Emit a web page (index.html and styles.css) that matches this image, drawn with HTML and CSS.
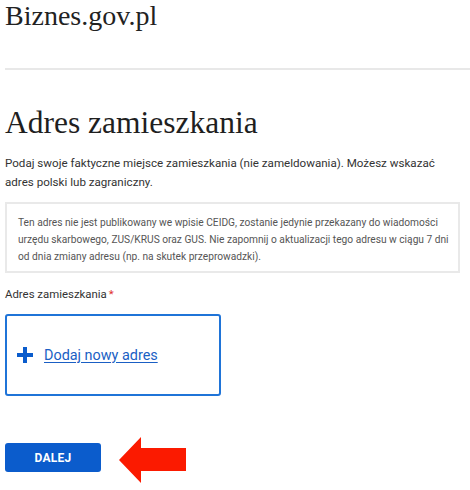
FILE: index.html
```html
<!DOCTYPE html>
<html lang="pl">
<head>
<meta charset="utf-8">
<title>Adres zamieszkania</title>
<link rel="stylesheet" href="styles.css">
</head>
<body>
<header class="site-header">
  <div class="logo">Biznes.gov.pl</div>
</header>
<main class="content">
  <h1 class="title">Adres zamieszkania</h1>
  <p class="lead">Podaj swoje faktyczne miejsce zamieszkania (nie zameldowania). Możesz wskazać adres polski lub zagraniczny.</p>
  <div class="info">Ten adres nie jest publikowany we wpisie CEIDG, zostanie jedynie przekazany do wiadomości urzędu skarbowego, ZUS/KRUS oraz GUS. Nie zapomnij o aktualizacji tego adresu w ciągu 7 dni od dnia zmiany adresu (np. na skutek przeprowadzki).</div>
  <div class="label">Adres zamieszkania<span class="req">*</span></div>
  <div class="card">
    <svg class="plus" width="16" height="16" viewBox="0 0 16 16" aria-hidden="true"><rect x="6" y="0" width="4" height="16" fill="#0b5ccc"/><rect x="0" y="6" width="16" height="4" fill="#0b5ccc"/></svg>
    <a class="add-link" href="#">Dodaj nowy adres</a>
  </div>
  <div class="actions">
    <button class="btn" type="button">DALEJ</button>
    <svg class="arrow" width="67" height="46" viewBox="0 0 67 46" aria-hidden="true"><polygon points="0,23 22,0 22,11 67,11 67,34 22,34 22,46" fill="#fb1a00"/></svg>
  </div>
</main>
</body>
</html>
```
FILE: styles.css
```css
html, body {
  margin: 0;
  padding: 0;
  background: #ffffff;
}
body {
  font-family: Roboto, "Liberation Sans", Arial, sans-serif;
  color: #333333;
}
.site-header {
  margin-left: 5px;
  border-bottom: 2px solid #e8e8e8;
}
.logo {
  font-family: "Liberation Serif", "Times New Roman", serif;
  font-size: 28px;
  line-height: 32px;
  color: #222222;
  padding-bottom: 36px;
}
.content {
  padding: 0 10px 0 5px;
}
.title {
  font-family: "Liberation Serif", "Times New Roman", serif;
  font-weight: normal;
  font-size: 31.5px;
  line-height: 40px;
  color: #1f1f1f;
  margin: 33px 0 0 0;
}
.lead {
  font-size: 11.6px;
  line-height: 19px;
  margin: 11px 0 0 0;
  color: #333333;
}
.info {
  margin-top: 10px;
  border: 2px solid #e9e9e9;
  padding: 10px 6px 6px 11px;
  font-size: 10.2px;
  line-height: 17px;
  color: #555555;
}
.label {
  margin-top: 13px;
  font-size: 11.4px;
  line-height: 16px;
  color: #333333;
}
.req {
  color: #e0312b;
  margin-left: 2px;
}
.card {
  margin-top: 12px;
  width: 216px;
  height: 82px;
  box-sizing: border-box;
  border: 2px solid #1f74d8;
  border-radius: 3px;
  display: flex;
  align-items: center;
  padding-left: 10px;
  gap: 11px;
}
.plus {
  flex: none;
}
.add-link {
  font-size: 14.4px;
  color: #1a5fc4;
  text-decoration: underline;
  text-underline-offset: 2px;
}
.actions {
  margin-top: 41px;
  display: flex;
  align-items: flex-start;
  gap: 18px;
}
.btn {
  margin-top: 6px;
  width: 96px;
  height: 29px;
  border: 0;
  border-radius: 3px;
  background: #0b5ccc;
  color: #ffffff;
  font-family: Roboto, "Liberation Sans", Arial, sans-serif;
  font-weight: bold;
  font-size: 12px;
  letter-spacing: 0.3px;
  padding: 0;
}
.arrow {
  flex: none;
  display: block;
}
```
